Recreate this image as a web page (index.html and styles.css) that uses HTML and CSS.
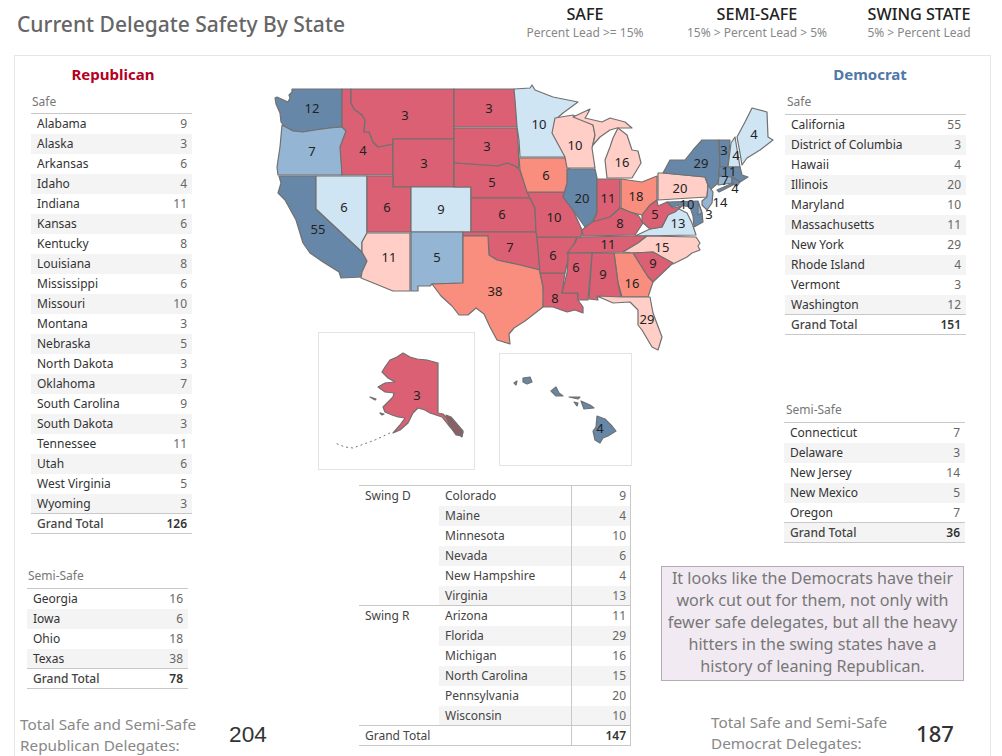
FILE: index.html
```html
<!DOCTYPE html>
<html lang="en">
<head>
    <meta charset="UTF-8">
    <title>Current Delegate Safety By State</title>
    <link rel="stylesheet" href="styles.css">
</head>
<body>
    <header class="top">
        <h1>Current Delegate Safety By State</h1>
        <div class="legend">
            <div class="legend-item safe"><b>SAFE</b><span>Percent Lead &gt;= 15%</span></div>
            <div class="legend-item semi"><b>SEMI-SAFE</b><span>15% &gt; Percent Lead &gt; 5%</span></div>
            <div class="legend-item swing"><b>SWING STATE</b><span>5% &gt; Percent Lead</span></div>
        </div>
    </header>

    <main class="panel">
        <section class="col-left">
            <h2 class="party rep">Republican</h2>
            <div class="group-label">Safe</div>
            <table class="list list-rsafe">
                <tr><td>Alabama</td><td>9</td></tr>
                <tr><td>Alaska</td><td>3</td></tr>
                <tr><td>Arkansas</td><td>6</td></tr>
                <tr><td>Idaho</td><td>4</td></tr>
                <tr><td>Indiana</td><td>11</td></tr>
                <tr><td>Kansas</td><td>6</td></tr>
                <tr><td>Kentucky</td><td>8</td></tr>
                <tr><td>Louisiana</td><td>8</td></tr>
                <tr><td>Mississippi</td><td>6</td></tr>
                <tr><td>Missouri</td><td>10</td></tr>
                <tr><td>Montana</td><td>3</td></tr>
                <tr><td>Nebraska</td><td>5</td></tr>
                <tr><td>North Dakota</td><td>3</td></tr>
                <tr><td>Oklahoma</td><td>7</td></tr>
                <tr><td>South Carolina</td><td>9</td></tr>
                <tr><td>South Dakota</td><td>3</td></tr>
                <tr><td>Tennessee</td><td>11</td></tr>
                <tr><td>Utah</td><td>6</td></tr>
                <tr><td>West Virginia</td><td>5</td></tr>
                <tr><td>Wyoming</td><td>3</td></tr>
                <tr class="total"><td>Grand Total</td><td>126</td></tr>
            </table>

            <div class="group-label label-rsemi">Semi-Safe</div>
            <table class="list list-rsemi">
                <tr><td>Georgia</td><td>16</td></tr>
                <tr><td>Iowa</td><td>6</td></tr>
                <tr><td>Ohio</td><td>18</td></tr>
                <tr><td>Texas</td><td>38</td></tr>
                <tr class="total"><td>Grand Total</td><td>78</td></tr>
            </table>

            <div class="tally tally-r">
                <p>Total Safe and Semi-Safe<br>Republican Delegates:</p>
                <strong>204</strong>
            </div>
        </section>

        <section class="col-center">
            <svg class="map" viewBox="270 85 510 385" width="510" height="385" role="img" aria-label="Map of US states">
                <g class="states">
                    <polygon class="ds" points="292,89 342,89 342,127 330,128 315,130 303,132 293,131 284,126 281,122 280,113 276,104 275,98 277,97 288,102 290,98 289,95 292,92"/>
                    <polygon class="dm" points="282,125 293,131 303,132 315,130 330,128 342,127 346,128 346,132 341,147 342,175 278,175 277,167 280,147"/>
                    <polygon class="ds" points="279,176 316,176 316,209 362,252 367,261 362,272 362,277 341,278 339,272 323,262 310,253 303,243 296,220 285,200 278,193 281,183"/>
                    <polygon class="dw" points="316,176 367,176 367,233 362,242 362,252 316,209"/>
                    <polygon class="rs" points="342,89 351,89 351,103 354,109 362,115 365,120 364,132 369,132 373,142 378,147 393,144 393,175 342,175 340,147 346,131 342,127"/>
                    <polygon class="rs" points="351,89 454,89 454,139 393,139 393,144 378,147 373,142 369,132 364,132 365,120 362,115 354,109 351,103"/>
                    <polygon class="rs" points="393,139 454,139 454,187 393,187"/>
                    <polygon class="rs" points="367,176 393,176 393,187 411,187 411,232 367,232"/>
                    <polygon class="dw" points="411,187 471,187 471,232 411,232"/>
                    <polygon class="rw" points="367,233 410,233 410,291 393,291 361,278 362,272 367,261 362,252 362,242"/>
                    <polygon class="dm" points="411,232 463,232 463,283 432,284 430,286 418,286 418,291 411,291"/>
                    <polygon class="rs" points="454,89 514,89 517,100 517,127 454,127"/>
                    <polygon class="rs" points="454,128 517,128 518,140 519,168 507,163 498,166 454,163"/>
                    <polygon class="rs" points="454,163 498,166 507,163 515,166 520,170 527,190 531,198 471,198 471,187 454,187"/>
                    <polygon class="rs" points="471,198 530,198 535,208 536,232 471,232"/>
                    <polygon class="rs" points="463,232 536,232 537,237 540,270 520,265 497,260 489,255 488,236 463,236"/>
                    <polygon class="rm" points="463,236 488,236 489,255 497,260 520,265 540,270 543,287 544,296 543,307 525,321 514,328 509,334 510,344 497,340 490,327 484,314 476,308 468,315 459,315 452,306 441,296 432,284 463,283"/>
                    <polygon class="rs" points="540,273 565,273 562,293 578,293 578,300 583,307 583,313 575,310 567,312 553,307 543,307 543,287"/>
                    <polygon class="rs" points="537,237 577,237 573,247 568,260 565,273 540,273"/>
                    <polygon class="rs" points="527,192 565,192 563,197 573,210 582,230 582,236 578,237 537,237 536,232 535,208"/>
                    <polygon class="rm" points="519,158 565,158 573,177 565,192 527,192 520,170"/>
                    <polygon class="dw" points="514,89 530,88 532,85 535,90 553,97 578,102 563,113 555,120 555,133 565,155 565,157 520,157 519,140 517,127 515,100"/>
                    <polygon class="rw" points="555,118 573,115 593,125 595,135 592,148 595,168 567,168 565,157 552,133"/>
                    <polygon class="rw" points="573,117 590,109 587,115 585,118 602,122 610,118 625,122 632,128 617,128 610,130 600,137 593,145 595,135 593,125"/>
                    <polygon class="rw" points="607,178 605,160 610,147 613,138 618,128 627,135 632,150 638,151 641,163 632,178"/>
                    <polygon class="ds" points="567,169 595,169 597,178 597,213 592,222 587,230 573,210 563,197 567,183"/>
                    <polygon class="rs" points="597,179 620,179 620,208 610,217 593,222 597,213"/>
                    <polygon class="rm" points="621,179 642,182 657,176 657,200 650,205 642,215 630,212 621,208"/>
                    <polygon class="rs" points="592,222 610,217 620,208 630,212 638,215 643,223 635,235 583,236 582,230"/>
                    <polygon class="dw" points="635,236 650,229 662,227 668,215 677,208 687,213 692,223 696,235"/>
                    <polygon class="rs" points="657,200 658,206 667,202 673,208 682,206 675,212 668,215 662,227 650,229 642,222 642,215 650,205"/>
                    <polygon class="rs" points="583,237 635,236 647,236 638,243 623,252 567,253 575,243 577,238"/>
                    <polygon class="rw" points="647,236 696,237 700,243 698,246 700,250 692,253 687,257 673,264 653,252 633,253 623,252 638,243"/>
                    <polygon class="rs" points="633,253 653,252 673,263 653,282 648,277"/>
                    <polygon class="rm" points="614,253 633,253 648,277 653,282 648,297 622,297 618,283"/>
                    <polygon class="rs" points="592,253 614,253 618,283 621,297 597,297 598,300 589,299"/>
                    <polygon class="rs" points="568,253 592,253 588,300 578,300 578,293 562,293 567,273 568,260"/>
                    <polygon class="rw" points="597,296 622,297 647,297 650,297 653,313 662,337 658,350 652,347 642,330 638,325 638,310 630,302 613,303"/>
                    <polygon class="rw" points="658,173 663,173 705,177 708,185 707,197 658,200"/>
                    <polygon class="ds" points="663,173 670,160 685,160 693,150 702,140 719,140 720,167 718,183 710,190 705,177"/>
                    <polygon class="ds" points="719,140 730,140 728,167 720,167"/>
                    <polygon class="dw" points="735,137 740,167 728,167 731,143"/>
                    <polygon class="dw" points="740,153 737,137 745,122 752,108 767,112 768,137 773,140 760,150 747,158 742,165"/>
                    <polygon class="ds" points="719,167 740,167 742,175 748,177 740,182 732,177 719,176"/>
                    <polygon class="dm" points="719,176 732,177 732,183 718,185"/>
                    <polygon class="ds" points="732,177 740,182 737,186 732,184"/>
                    <polygon class="dm" points="708,185 713,192 712,203 707,210 702,205 702,201 707,197"/>
                    <polygon class="ds" points="717,190 733,183 733,185 719,192"/>
                    <polygon class="ds" points="667,202 698,201 702,213 703,222 694,227 693,216 690,207 685,206 680,205 672,207"/>
                    <polygon class="dm" points="698,202 702,213 698,215"/>
                </g>

                <rect class="inset" x="318.5" y="332.5" width="156" height="137"/>
                <rect class="inset" x="499.5" y="353.5" width="132" height="112"/>

                <g class="states">
                    <polygon class="rs" points="403,353 410,357 417,359 427,360 438,363 438,413 443,414 450,422 457,428 463,432 462,437 457,433 450,427 442,417 430,413 425,410 418,408 413,413 408,423 400,430 393,433 400,425 405,418 398,417 392,415 385,412 383,407 388,402 393,397 394,393 385,392 378,387 385,383 395,382 388,378 382,372 385,367 390,360 397,357"/>
                    <polygon class="rs" points="370,397 376,399 375,400"/>
                    <polygon class="rs" points="380,413 384,414 382,415"/>
                    <polygon class="panhandle" points="446,415 451,417 463,431 462,436 456,435 449,425"/>
                    <polyline class="chain" points="390,433 375,440 353,448 345,447 335,443"/>
                    <polygon class="ds" points="523,378 530,377 532,382 527,384 523,382"/>
                    <polygon class="ds" points="514,383 517,381 516,385"/>
                    <polygon class="ds" points="551,391 556,387 559,393 563,396 556,396"/>
                    <polygon class="ds" points="569,397 580,397 578,399"/>
                    <polygon class="ds" points="574,402 578,403 577,406"/>
                    <polygon class="ds" points="581,401 590,405 594,408 584,409"/>
                    <polygon class="ds" points="597,416 605,419 612,426 616,431 608,436 603,438 600,443 595,440 593,431 596,427"/>
                </g>

                <g class="counts">
                    <text x="312" y="108">12</text><text x="312" y="151">7</text><text x="318" y="229">55</text>
                    <text x="344" y="207">6</text><text x="389" y="257">11</text><text x="437" y="257">5</text>
                    <text x="441" y="209">9</text><text x="387" y="207">6</text><text x="363" y="150">4</text>
                    <text x="405" y="115">3</text><text x="424" y="163">3</text><text x="489" y="108">3</text>
                    <text x="487" y="146">3</text><text x="492" y="182">5</text><text x="502" y="214">6</text>
                    <text x="510" y="247">7</text><text x="495" y="291">38</text><text x="539" y="124">10</text>
                    <text x="575" y="145">10</text><text x="546" y="175">6</text><text x="582" y="198">20</text>
                    <text x="554" y="217">10</text><text x="553" y="255">6</text><text x="555" y="298">8</text>
                    <text x="576" y="267">6</text><text x="603" y="274">9</text><text x="632" y="283">16</text>
                    <text x="653" y="263">9</text><text x="608" y="244">11</text><text x="662" y="247">15</text>
                    <text x="678" y="223">13</text><text x="620" y="223">8</text><text x="655" y="214">5</text>
                    <text x="608" y="198">11</text><text x="636" y="196">18</text><text x="680" y="188">20</text>
                    <text x="622" y="162">16</text><text x="701" y="163">29</text><text x="724" y="150">3</text>
                    <text x="736" y="155">4</text><text x="754" y="134">4</text><text x="729" y="171">11</text>
                    <text x="725" y="180">7</text><text x="735" y="188">4</text><text x="720" y="202">14</text>
                    <text x="687" y="204">10</text><text x="709" y="214">3</text><text x="647" y="319">29</text>
                    <text x="417" y="395">3</text><text x="600" y="428">4</text>
                </g>
            </svg>

            <table class="swing-table">
                <tr><td class="group sep" rowspan="6">Swing D</td><td class="state">Colorado</td><td class="num">9</td></tr>
                <tr><td class="state">Maine</td><td class="num">4</td></tr>
                <tr><td class="state">Minnesota</td><td class="num">10</td></tr>
                <tr><td class="state">Nevada</td><td class="num">6</td></tr>
                <tr><td class="state">New Hampshire</td><td class="num">4</td></tr>
                <tr><td class="state sep">Virginia</td><td class="num sep">13</td></tr>
                <tr><td class="group sep" rowspan="6">Swing R</td><td class="state">Arizona</td><td class="num">11</td></tr>
                <tr><td class="state">Florida</td><td class="num">29</td></tr>
                <tr><td class="state">Michigan</td><td class="num">16</td></tr>
                <tr><td class="state">North Carolina</td><td class="num">15</td></tr>
                <tr><td class="state">Pennsylvania</td><td class="num">20</td></tr>
                <tr><td class="state sep">Wisconsin</td><td class="num sep">10</td></tr>
                <tr class="total"><td class="group" colspan="2">Grand Total</td><td class="num">147</td></tr>
            </table>
        </section>

        <section class="col-right">
            <h2 class="party dem">Democrat</h2>
            <div class="group-label label-dsafe">Safe</div>
            <table class="list list-dsafe">
                <tr><td>California</td><td>55</td></tr>
                <tr><td>District of Columbia</td><td>3</td></tr>
                <tr><td>Hawaii</td><td>4</td></tr>
                <tr><td>Illinois</td><td>20</td></tr>
                <tr><td>Maryland</td><td>10</td></tr>
                <tr><td>Massachusetts</td><td>11</td></tr>
                <tr><td>New York</td><td>29</td></tr>
                <tr><td>Rhode Island</td><td>4</td></tr>
                <tr><td>Vermont</td><td>3</td></tr>
                <tr><td>Washington</td><td>12</td></tr>
                <tr class="total"><td>Grand Total</td><td>151</td></tr>
            </table>

            <div class="group-label label-dsemi">Semi-Safe</div>
            <table class="list list-dsemi">
                <tr><td>Connecticut</td><td>7</td></tr>
                <tr><td>Delaware</td><td>3</td></tr>
                <tr><td>New Jersey</td><td>14</td></tr>
                <tr><td>New Mexico</td><td>5</td></tr>
                <tr><td>Oregon</td><td>7</td></tr>
                <tr class="total"><td>Grand Total</td><td>36</td></tr>
            </table>

            <div class="note">It looks like the Democrats have their work cut out for them, not only with fewer safe delegates, but all the heavy hitters in the swing states have a history of leaning Republican.</div>

            <div class="tally tally-d">
                <p>Total Safe and Semi-Safe<br>Democrat Delegates:</p>
                <strong>187</strong>
            </div>
        </section>
    </main>
</body>
</html>
```

FILE: styles.css
```css
* {
    margin: 0;
    padding: 0;
    box-sizing: border-box;
    font-family: 'Noto Sans', sans-serif;
}

html, body {
    height: 756px;
    overflow: hidden;
    background: #fff;
}

/* header */
.top {
    height: 55px;
    display: flex;
}

.top h1 {
    font-size: 21px;
    font-weight: 500;
    color: #666;
    padding: 8px 0 0 17px;
    width: 500px;
    line-height: 32px;
}

.legend {
    display: flex;
}

.legend-item {
    display: flex;
    flex-direction: column;
    align-items: center;
    padding-top: 4px;
}

.legend-item.safe { width: 170px; }
.legend-item.semi { width: 174px; }
.legend-item.swing { width: 150px; }

.legend-item b {
    font-size: 16.2px;
    font-weight: 500;
    color: #222;
    line-height: 20px;
}

.legend-item span {
    font-size: 12px;
    color: #888;
    line-height: 18px;
}

/* main panel */
.panel {
    height: 701px;
    margin: 0 11px 0 14px;
    border: 1px solid #e6e6e6;
    border-bottom: none;
    display: flex;
}

.col-left { width: 255px; }
.col-center { width: 380px; }
.col-right { width: 339px; }

.party {
    font-size: 15px;
    font-weight: 700;
    line-height: 20px;
    text-align: center;
    margin-top: 8px;
    margin-bottom: 10px;
}

.party.rep {
    color: #b5001f;
    width: 196px;
}

.party.dem {
    color: #4e79a7;
    width: 170px;
    margin-left: 135px;
}

.group-label {
    font-size: 12px;
    color: #777;
    line-height: 16px;
    margin-left: 17px;
    margin-bottom: 3px;
}

.label-rsemi { margin: 34px 0 4px 13px; }
.label-dsafe { margin: 0 0 4px 137px; }
.label-dsemi { margin: 67px 0 4px 136px; }

/* state lists */
.list {
    border-collapse: separate;
    border-spacing: 0;
    border-top: 1px solid #c8c8c8;
    font-size: 12px;
}

.list td {
    height: 20px;
    line-height: 14px;
    color: #333;
    padding-left: 6px;
}

.list td:last-child {
    text-align: right;
    color: #666;
    padding: 0 5px 0 0;
}

.list tr:nth-child(even) td {
    background: #f4f4f4;
}

.list tr:nth-last-child(2) td,
.list tr.total td {
    border-bottom: 1px solid #c8c8c8;
}

.list tr.total td {
    font-weight: 500;
    color: #444;
}

.list tr.total td:last-child {
    font-weight: 600;
    color: #333;
}

.list-rsafe { width: 161px; margin-left: 16px; }
.list-rsemi { width: 161px; margin-left: 12px; }
.list-dsafe { width: 181px; margin-left: 135px; }
.list-dsemi { width: 181px; margin-left: 134px; }

/* map */
.map {
    display: block;
    margin-top: 29px;
    overflow: visible;
}

.states polygon {
    stroke: #707070;
    stroke-width: 1.2;
    stroke-linejoin: round;
}

.rs { fill: #db6073; }
.rm { fill: #f98e7e; }
.rw { fill: #ffcec7; }
.ds { fill: #6787a8; }
.dm { fill: #94b5d3; }
.dw { fill: #cfe5f3; }

.states .panhandle {
    fill: #8a6066;
}

.chain {
    fill: none;
    stroke: #777;
    stroke-width: 1;
    stroke-dasharray: 2 3;
}

.inset {
    fill: none;
    stroke: #e3e3e3;
    stroke-width: 1;
}

.counts text {
    font-size: 13px;
    fill: #222;
    text-anchor: middle;
    dominant-baseline: central;
}

/* swing table */
.swing-table {
    width: 272px;
    margin: 15px 0 0 89px;
    border-collapse: separate;
    border-spacing: 0;
    border-top: 1px solid #c8c8c8;
    border-right: 1px solid #c8c8c8;
    font-size: 12px;
    table-layout: fixed;
}

.swing-table td {
    height: 20px;
    line-height: 14px;
    color: #444;
}

.swing-table .group {
    width: 80px;
    padding-left: 6px;
    vertical-align: top;
    padding-top: 3px;
}

.swing-table .state {
    width: 132px;
    padding-left: 6px;
}

.swing-table .num {
    width: 59px;
    text-align: right;
    padding-right: 4px;
    color: #666;
    border-left: 1px solid #c8c8c8;
}

.swing-table tr:nth-child(even) .state,
.swing-table tr:nth-child(even) .num {
    background: #f4f4f4;
}

.swing-table td.sep {
    border-bottom: 1px solid #c8c8c8;
}

.swing-table tr.total td {
    border-bottom: 1px solid #c8c8c8;
    padding-top: 0;
    vertical-align: middle;
}

.swing-table tr.total .num {
    font-weight: 600;
    color: #333;
}

/* note box */
.note {
    width: 303px;
    height: 115px;
    margin: 23px 0 0 11px;
    background: #f1eaf2;
    border: 1px solid #b4adb6;
    font-size: 16.1px;
    line-height: 22px;
    color: #777;
    text-align: center;
}

/* totals */
.tally {
    display: flex;
    align-items: center;
}

.tally p {
    font-size: 15.3px;
    line-height: 21px;
    color: #888;
}

.tally strong {
    color: #333;
    font-weight: 500;
}

.tally-r {
    margin: 25px 0 0 5px;
}

.tally-r strong {
    font-family: 'Liberation Sans', sans-serif;
    font-size: 22.6px;
    margin-left: 33px;
}

.tally-d {
    margin: 31px 0 0 61px;
}

.tally-d strong {
    font-size: 22px;
    margin-left: 29px;
}
```
